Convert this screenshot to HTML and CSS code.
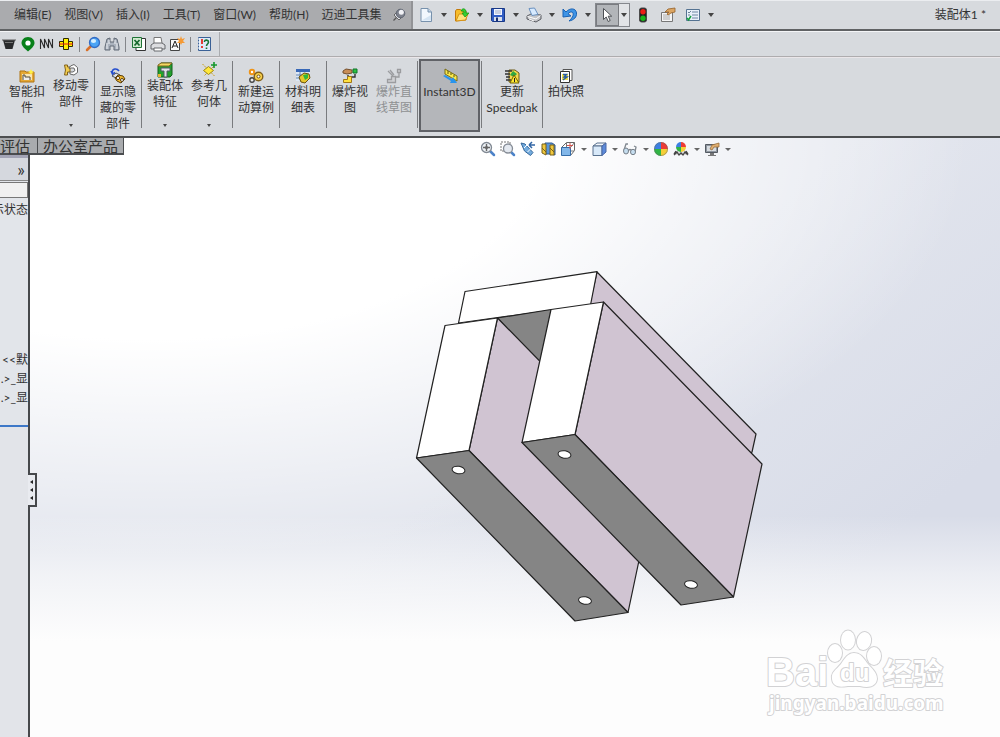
FILE: index.html
```
<!DOCTYPE html>
<html lang="zh-CN">
<head>
<meta charset="utf-8">
<title>装配体1 *</title>
<link rel="stylesheet" href="styles.css">
</head>
<body>
<header class="titlebar">
  <nav class="menubar">
    <button class="menu">编辑(E)</button>
    <button class="menu">视图(V)</button>
    <button class="menu">插入(I)</button>
    <button class="menu">工具(T)</button>
    <button class="menu">窗口(W)</button>
    <button class="menu">帮助(H)</button>
    <button class="menu">迈迪工具集</button>
    <button class="icon" aria-label="固定菜单"><svg viewBox="0 0 16 16"><path d="M6 10 2.500 13.500" stroke="#555" stroke-width="1.300"/><path d="m3 8 5 5 2-2-5-5z" fill="#e4e5ea" stroke="#666"/><circle cx="9.500" cy="6.500" r="4.300" fill="#7d818c" stroke="#5f6572"/><circle cx="10.300" cy="5.300" r="2.500" fill="#f1f2f6"/></svg></button>
  </nav>
  <div class="quick">
    <button class="icon" aria-label="新建"><svg viewBox="0 0 16 16"><path d="M3 1.500h7l3.500 3.500v9.500H3z" fill="#f1f7fd" stroke="#7791ac"/><path d="M10 1.500V5h3.500" fill="#c2d4e6" stroke="#7791ac"/><path d="M3.500 13.500H13V8z" fill="#d4e4f3"/></svg></button>
    <button class="caret" aria-label="新建选项"></button>
    <button class="icon" aria-label="打开"><svg viewBox="0 0 16 16"><path d="M1.500 14V4l1-1.500h4L8 4h4v9z" fill="#f6bd2a" stroke="#c37a0c"/><path d="M2 14 5 7h9l-2.500 6z" fill="#ffe27b" stroke="#d79316"/><path d="M7 4c1-3 4-3 5 0V6h3l-4 4-3-4h2c0-2-1-2-3-2z" fill="#36cf35" stroke="#10930f" stroke-width=".7"/></svg></button>
    <button class="caret" aria-label="打开选项"></button>
    <button class="icon" aria-label="保存"><svg viewBox="0 0 16 16"><path d="M1.500 1.500h13v13h-12l-1-1z" fill="#315dc4" stroke="#183886"/><path d="M4 2h8v6H4z" fill="#f1f5ff"/><path d="M5 4h6M5 6h6" stroke="#9faac4"/><path d="M4 10h8v4H4z" fill="#d9dfeb"/><path d="M6 10.500h2V14H6z" fill="#173074"/></svg></button>
    <button class="caret" aria-label="保存选项"></button>
    <button class="icon" aria-label="打印"><svg viewBox="0 0 16 16"><path d="m1 9 4-2 10 1v4l-5 3-9-3z" fill="#c4c5c9" stroke="#5b5d63"/><path d="M3 1.500 8.500 1l3.500 6.500-6 1z" fill="#d7eaff" stroke="#6a91c0"/><path d="m1.500 9.500 8.500 2.500 4.500-3.500M3 12l5 2" fill="none" stroke="#fff"/></svg></button>
    <button class="caret" aria-label="打印选项"></button>
    <button class="icon" aria-label="撤销"><svg viewBox="0 0 16 16"><path d="M1 2v8l8-1-3-2.300C9 3.500 12 5 11 8.500c-.5 2-2 3.500-4 5.500 5-1 8-4 7.500-8C14 1 8 .5 4 5z" fill="#3e94e6" stroke="#1961b3"/></svg></button>
    <button class="caret" aria-label="撤销选项"></button>
    <div class="split">
      <button class="pick" aria-label="选择"><svg viewBox="0 0 16 16"><path d="M4.500 1.500v11l2.700-2.500 2 4.500 2-1-2-4.300h3.500z" fill="#fff" stroke="#4d5055"/></svg></button>
      <button class="caret" aria-label="选择选项"></button>
    </div>
    <div class="quick-end">
      <button class="icon" aria-label="重建模型"><svg viewBox="0 0 16 16"><rect x="4.500" y="1" width="7" height="14" rx="2" fill="#222" stroke="#4b4b4b"/><circle cx="8" cy="4.700" r="2.700" fill="#ec1d16"/><circle cx="8" cy="11.200" r="2.700" fill="#1bb51c"/></svg></button>
      <button class="icon" aria-label="文件属性"><svg viewBox="0 0 16 16"><path d="M1.500 5.500h11v9h-11z" fill="#f4f4f5" stroke="#777"/><path d="M3 8h7M3 10h7M3 12h7" stroke="#aaa"/><path d="M5 5 8 2l7-1v4l-4 1-3 2-1-1 2-2z" fill="#dba563" stroke="#95622b" stroke-width=".8"/></svg></button>
      <button class="icon" aria-label="选项"><svg viewBox="0 0 16 16"><path d="M1.500 2.500h13v11h-13z" fill="#e9f1f9" stroke="#557392"/><path d="M7 5h6M7 8h6M7 11h6" stroke="#6c86a1"/><path d="m3 5 1 1 2-2M3 8h2" fill="none" stroke="#6b8096"/><path d="m2 11 1.500 2L6 9" fill="none" stroke="#14a03d" stroke-width="1.500"/></svg></button>
    </div>
    <button class="caret" aria-label="更多选项"></button>
  </div>
  <h1 class="doc-title">装配体1 *</h1>
</header>

<div class="tools">
  <div class="tool-band">
    <button class="icon" aria-label="滤杯"><svg viewBox="0 0 16 16"><path d="M2 4h12l-2.500 9h-7z" fill="#292a2c"/><path d="M1 4h14" stroke="#5a5a5a"/><path d="M4 6.500h8" stroke="#777"/></svg></button>
    <button class="icon" aria-label="垫圈"><svg viewBox="0 0 16 16"><path d="M8 1C4 1 1.500 4 1.500 7S5 13 8 15.500C11 13 14.500 10 14.500 7S12 1 8 1z" fill="#08801a"/><circle cx="8" cy="7" r="2.600" fill="#fff"/></svg></button>
    <button class="icon" aria-label="弹簧"><svg viewBox="0 0 16 16"><path d="M1.500 13V3l4 9V3l4 9V3l4 9V3" fill="none" stroke="#2b2b2b" stroke-width="1.100"/></svg></button>
    <button class="icon" aria-label="联轴器"><svg viewBox="0 0 16 16"><path d="M5.500 2.500h5v3h4v5h-4v3h-5v-3h-4v-5h4z" fill="#fff100" stroke="#2c2900"/><path d="M5.500 5v6M10.500 5v6" stroke="#2c2900"/><path d="M1 8h14" stroke="#e21b17"/></svg></button>
    <i class="bar"></i>
    <button class="icon" aria-label="查找"><svg viewBox="0 0 16 16"><path d="m6 10-4 4" stroke="#d9702a" stroke-width="2.500" stroke-linecap="round"/><circle cx="9.500" cy="6.500" r="5" fill="#4ba4f5" stroke="#346cc4" stroke-width="1.300"/><ellipse cx="8.500" cy="5" rx="2.600" ry="2" fill="#d6efff"/></svg></button>
    <button class="icon" aria-label="望远镜"><svg viewBox="0 0 16 16"><path d="M3 3 6 2v4h4V2l3 1 2 8v3h-5v-4H6v4H1v-3z" fill="#aab2bd" stroke="#626b77"/><path d="M3 7v6M5 4v4M11 4v4M13 7v6" stroke="#eef0f4"/></svg></button>
    <i class="bar"></i>
    <button class="icon" aria-label="导出表格"><svg viewBox="0 0 16 16"><path d="M5 2.500h9.500v12H5z" fill="#fff" stroke="#333"/><path d="M1.500 1.500h9v10h-9z" fill="#cfe9cf" stroke="#1f7336"/><path d="m3.500 4 5 5.500M8.500 4l-5 5.500" stroke="#14662c" stroke-width="1.700"/></svg></button>
    <button class="icon" aria-label="批量打印"><svg viewBox="0 0 16 16"><path d="M4 7V1.500h7L12 7" fill="#fff" stroke="#777"/><path d="m1 9 3-2h8l3 2v4H1z" fill="#dcdde0" stroke="#66686c"/><path d="M4 12h8v3H4z" fill="#fff" stroke="#66686c"/></svg></button>
    <button class="icon" aria-label="文字样式"><svg viewBox="0 0 16 16"><path d="M1.500 3.500h9v11h-9z" fill="#f9f9f9" stroke="#444"/><path d="m3 12 3-7 3 7M4 10h4" fill="none" stroke="#222"/><path d="m12 0 1 3 3-1-2 3 2 2-3 0-1 2-1-2-3 0 2-2-2-3 3 1z" fill="#f59a35"/></svg></button>
    <i class="bar"></i>
    <button class="icon" aria-label="帮助"><svg viewBox="0 0 16 16"><path d="M2.500 1.500h12v13h-12z" fill="#dce9f8" stroke="#3b6196"/><path d="M2 3h2M2 6h2M2 9h2M2 12h2" stroke="#fff"/><path d="M6 3v5M6 10v2" stroke="#e32d21" stroke-width="1.800"/><path d="M8.500 6c0-3 4-2 4 0s-2 2-2 4M10.500 11.500V13" fill="none" stroke="#147532" stroke-width="1.600"/></svg></button>
  </div>
</div>

<div class="ribbon">
  <button class="cmd"><svg viewBox="0 0 16 16"><path d="M1 3h5l1 1h8v10H1z" fill="#e6a936" stroke="#af7412"/><path d="M3 6h10v6H3z" fill="#f8e6b6"/><path d="M4 12V7h2v2h5v3" fill="#eee" stroke="#554b38"/><path d="m12 1 1 2 2 1-2 1-1 2-1-2-2-1 2-1z" fill="#fff145"/></svg><span>智能扣<br>件</span></button>
  <button class="cmd more"><svg viewBox="0 0 16 16"><path d="M1.500 3h3v2h2.500v5H4.500v3h-3l1-5z" fill="#f2cd4e" stroke="#80611c"/><path d="M6 6.500 7.500 4 11 2.500l3.500 3v5L11 13l-4-1v-2h3l2-1.500L11 6H8z" fill="#fff" stroke="#666"/></svg><span>移动零<br>部件</span><i class="drop"></i></button>
  <i class="sep"></i>
  <button class="cmd"><svg viewBox="0 0 16 16"><path d="M2 5c0-5 5-5 7-2M1 3l1.500 3L5 4.500" fill="none" stroke="#264fce" stroke-width="1.600"/><path d="m2 8 4-3 4 2-4 3z" fill="#dce1ed" stroke="#4a4f5c"/><path d="m5 10 3-3 5 1 2 3-4 4-4-2z" fill="#f0b72e" stroke="#5a3f0a"/><circle cx="8" cy="10" r="1.600" fill="#fff" stroke="#66430b"/><circle cx="12" cy="12" r="1.500" fill="#fff" stroke="#553d13"/></svg><span>显示隐<br>藏的零<br>部件</span></button>
  <i class="sep"></i>
  <button class="cmd more"><svg viewBox="0 0 16 16"><path d="m1 4 3-3h11v12l-2 2H1z" fill="#22a22c" stroke="#145c1a"/><path d="M1 3 4 1h11l-3 3H1z" fill="#f3da62" stroke="#826522"/><path d="M4 6h9v3h-3v6H7V9H4z" fill="#e1e3e8" stroke="#555b68"/><path d="M1 12h3v3H1z" fill="#e6b532"/></svg><span>装配体<br>特征</span><i class="drop"></i></button>
  <button class="cmd more"><svg viewBox="0 0 16 16"><path d="m1.500 2 12 12M14 3 3 14" stroke="#c99b12" stroke-dasharray="2 1"/><path d="m2.500 8.500 5-4 5 4-5 4z" fill="#ffe83a" stroke="#9c8512"/><path d="M13 0v6M10 3h6" stroke="#15982e" stroke-width="1.600"/></svg><span>参考几<br>何体</span><i class="drop"></i></button>
  <i class="sep"></i>
  <button class="cmd"><svg viewBox="0 0 16 16"><circle cx="4" cy="4" r="2.200" fill="#fff" stroke="#ef9417" stroke-width="2"/><circle cx="4" cy="12" r="2.200" fill="#eee" stroke="#444" stroke-width="1.400"/><circle cx="10.500" cy="8.500" r="4.300" fill="#fbd34c" stroke="#81601a" stroke-width="1.400"/><circle cx="10.500" cy="8.500" r="1.500" fill="#fff" stroke="#705117"/></svg><span>新建运<br>动算例</span></button>
  <i class="sep"></i>
  <button class="cmd"><svg viewBox="0 0 16 16"><path d="M1 2h14v11H1z" fill="#dbe7f6"/><path d="M1 1h14v3H1z" fill="#3868b7"/><path d="M1 7h7M1 10h6M5 4v8" stroke="#6484ae"/><path d="m4 9 5-4 5 1 1 4-5 5-4-1z" fill="#e7c72d" stroke="#685310"/><path d="m8 7 5-1v4l-3 2z" fill="#2fb73c"/></svg><span>材料明<br>细表</span></button>
  <i class="sep"></i>
  <button class="cmd"><svg viewBox="0 0 16 16"><path d="m1 3 3-2 6 1v3L5 6 1 5z" fill="#c98d56" stroke="#74502e"/><path d="M11 1h4v4h-4z" fill="#2bc142" stroke="#13752a"/><path d="M6 7v4M13 6v3H9v4" fill="none" stroke="#333" stroke-width="1.400"/><path d="M1.500 11.500h4v-3h4v6h-8z" fill="#ffe140" stroke="#a07817"/></svg><span>爆炸视<br>图</span></button>
  <button class="cmd" disabled><svg viewBox="0 0 16 16"><path d="m2 3 5 5M4 2l4 5" stroke="#9b9c9f" stroke-width="1.300"/><path d="M11.500 1.500h3v3h-3zM13 5v4H9M1.500 11.500h4v-3h4v6h-8z" fill="#cfd0d3" stroke="#9b9c9f" stroke-width="1.300"/></svg><span>爆炸直<br>线草图</span></button>
  <i class="sep"></i>
  <button class="cmd pressed" aria-pressed="true"><svg viewBox="0 0 16 16"><path d="m3 1 12 7v5L3 6z" fill="#f8e84b" stroke="#796d17"/><path d="M6 3v3M9 5v2M12 7v2" stroke="#5d5412"/><path d="m1 8 2-1 7 4 1-2 4 6h-7l1-2z" fill="#2894ed"/></svg><span>Instant3D</span></button>
  <i class="sep"></i>
  <button class="cmd wide"><svg viewBox="0 0 16 16"><path d="M5 2h6l4 3v9H5z" fill="#f5d84d" stroke="#6b5a18"/><path d="M1 3h7M1 6h5M2 9h4M2 12h5" stroke="#333" stroke-width="1.300"/><path d="m6 7 3-4 4 3-3 3z" fill="#30a741"/><path d="m10 7 5 8H6z" fill="#ffe934" stroke="#706000"/><path d="M10.500 10v4" stroke="#222"/></svg><span>更新<br>Speedpak</span></button>
  <i class="sep"></i>
  <button class="cmd"><svg viewBox="0 0 16 16"><path d="M5 1.500h9v11H5z" fill="#fff" stroke="#555"/><path d="M2.500 3.500h9v11h-9z" fill="#fff" stroke="#333"/><path d="M4 6h6v6H4z" fill="#f2dd45"/><path d="M5 6.500h3.500L6 9h3l-4 3" fill="none" stroke="#265ba6" stroke-width="1.400"/></svg><span>拍快照</span></button>
</div>

<main class="workspace">
  <svg class="model" viewBox="0 138 1000 599" role="img" aria-label="U 形支架装配体">
    <g stroke="#222" stroke-width="1.200" stroke-linejoin="round">
      <path d="M597 272 756 434 752 452 735 470 590 303z" fill="#d0c4d2"/>
      <path d="M465 291.500 597 271.700 590.500 305 458.500 323z" fill="#fff"/>
      <path d="M497.500 318 551 309.500 545 370z" fill="#858585"/>
      <path d="M497.500 318 656 480 628 612.500 469 450.500z" fill="#d0c4d2"/>
      <path d="M445 325.500 497.500 318 469 450.500 416.500 458z" fill="#fff"/>
      <path d="M416.500 458 469 450.500 628 612.500 575 621z" fill="#858585"/>
      <path d="M603.500 302 762 464 733.500 597 575 434.500z" fill="#d0c4d2"/>
      <path d="M551 309.500 603.500 302 575 434.500 522 442.500z" fill="#fff"/>
      <path d="M522 442.500 575 434.500 733.500 597 681 605z" fill="#858585"/>
    </g>
    <g fill="#fff" stroke="#222">
      <ellipse cx="458.500" cy="470" rx="6.500" ry="3.700" transform="rotate(10 458.500 470)"/>
      <ellipse cx="564.500" cy="454.500" rx="6.500" ry="3.700" transform="rotate(10 564.500 454.500)"/>
      <ellipse cx="585" cy="600.500" rx="6.500" ry="3.700" transform="rotate(10 585 600.500)"/>
      <ellipse cx="691" cy="584.500" rx="6.500" ry="3.700" transform="rotate(10 691 584.500)"/>
    </g>
  </svg>

  <div class="tabs">
    <button class="tab">评估</button>
    <button class="tab">办公室产品</button>
  </div>

  <aside class="panel">
    <div class="panel-head"><button class="expand" aria-label="展开">»</button></div>
    <input class="filter" aria-label="过滤">
    <p class="row state">示状态</p>
    <ul class="tree">
      <li class="row">&lt;&lt;默</li>
      <li class="row">.&gt;_显</li>
      <li class="row">.&gt;_显</li>
    </ul>
    <div class="panel-foot"></div>
    <button class="grip" aria-label="折叠面板"><svg viewBox="0 0 5 22"><path d="M4 1v4L1 3zM4 9v4L1 11zM4 17v4L1 19z" fill="#222"/></svg></button>
  </aside>

  <div class="heads-up">
    <button class="icon" aria-label="整屏显示全图"><svg viewBox="0 0 16 16"><path d="m10 10 4 4" stroke="#4c83c9" stroke-width="2.500" stroke-linecap="round"/><circle cx="6.500" cy="6.500" r="5" fill="#edf1f5" stroke="#808892" stroke-width="1.300"/><path d="M6.500 3v7M3 6.500h7" stroke="#666" stroke-width="1.400"/><circle cx="6.500" cy="6.500" r="1.600" fill="#666"/></svg></button>
    <button class="icon" aria-label="局部放大"><svg viewBox="0 0 16 16"><path d="M1 1h9v9H1z" fill="none" stroke="#777" stroke-dasharray="2 1"/><path d="m11 11 3 3" stroke="#4c83c9" stroke-width="2.500" stroke-linecap="round"/><circle cx="8" cy="7.500" r="4.500" fill="#e4e9f0" stroke="#858c96" stroke-width="1.300"/></svg></button>
    <button class="icon" aria-label="上一视图"><svg viewBox="0 0 16 16"><path d="m1 2 4 1 8 8.500-2.500 3-6-4.500z" fill="#74acde" stroke="#38699b"/><path d="m4 7 3-3M7.500 11l3-3" stroke="#fff"/><path d="M15 4H9m0 0 3-3M9 4l3 3" fill="none" stroke="#3266a5" stroke-width="1.500"/></svg></button>
    <button class="icon" aria-label="剖面视图"><svg viewBox="0 0 16 16"><path d="M5 2h7l3 2v10l-4-1H6z" fill="#5895db" stroke="#315d98"/><path d="M2 3h4v11l-4-2zM10 4h4v10h-4z" fill="#f0c83c" stroke="#77611b"/><path d="m2 7 4 4M10 7l4 4" stroke="#77611b"/></svg></button>
    <button class="icon" aria-label="视图定向"><svg viewBox="0 0 16 16"><path d="m1.500 6.500 5-5h8v8l-4 5" fill="#fff" stroke="#666"/><path d="M1.500 6.500h9v8h-9z" fill="#82b7e9" stroke="#356da9"/><path d="m10.500 6.500 4-5M6.500 2v4M11 10h3" stroke="#777"/><path d="M10 2v6M7 4.500h6" stroke="#d25650"/></svg></button>
    <button class="caret" aria-label="视图定向选项"></button>
    <button class="icon" aria-label="显示样式"><svg viewBox="0 0 16 16"><path d="m2 5 4-3h9l-4 3z" fill="#f3f7fc" stroke="#58718e"/><path d="M2 5h9v9.500H2z" fill="#d8e9f9" stroke="#58718e"/><path d="m11 5 4-3v9l-4 3.500z" fill="#5c8ada" stroke="#4a68a5"/></svg></button>
    <button class="caret" aria-label="显示样式选项"></button>
    <button class="icon" aria-label="隐藏/显示项目"><svg viewBox="0 0 16 16"><path d="M2 9 4 3l2 0M13 11l1-5-2-1M6 10c1-2 3-2 4 0" fill="none" stroke="#818890" stroke-width="1.300"/><ellipse cx="4" cy="10" rx="2.500" ry="3" fill="#c5ddef" stroke="#777f88"/><ellipse cx="11" cy="11" rx="2.500" ry="2.700" fill="#c5ddef" stroke="#777f88"/></svg></button>
    <button class="caret" aria-label="隐藏/显示选项"></button>
    <button class="icon" aria-label="编辑外观"><svg viewBox="0 0 16 16"><path d="M8 8V1a7 7 0 0 0-7 7z" fill="#3c80e2"/><path d="M8 8h7a7 7 0 0 0-7-7z" fill="#ed3b35"/><path d="M8 8H1a7 7 0 0 0 7 7z" fill="#30b545"/><path d="M8 8v7a7 7 0 0 0 7-7z" fill="#f5cf37"/><circle cx="8" cy="8" r="6.500" fill="none" stroke="#666" stroke-opacity=".5"/></svg></button>
    <button class="icon" aria-label="应用布景"><svg viewBox="0 0 16 16"><path d="M1 14 4 9h8l3 5z" fill="#ddd"/><path d="M8 6V1a5 5 0 0 0-5 5z" fill="#3c80e2"/><path d="M8 6h5a5 5 0 0 0-5-5z" fill="#ed3b35"/><path d="M8 6H3a5 5 0 0 0 5 5z" fill="#30b545"/><path d="M8 6v5a5 5 0 0 0 5-5z" fill="#f5cf37"/><path d="m1 14 3-3 2 3 2-2 2 2 2-3 3 3M3 10 1 13M13 10l2 3" fill="none" stroke="#444" stroke-width="1.300"/></svg></button>
    <button class="caret" aria-label="布景选项"></button>
    <button class="icon" aria-label="视图设定"><svg viewBox="0 0 16 16"><path d="M1.500 3.500h12v8h-12z" fill="#8f969f" stroke="#555b63"/><path d="M3 5h9v5H3z" fill="#d7dce1"/><path d="M6 12h4v2h2v1H4v-1h2z" fill="#777"/><path d="m6 8 2-4 7-2v4l-5 0-2 3z" fill="#dfae70" stroke="#976c3b" stroke-width=".8"/></svg></button>
    <button class="caret" aria-label="视图设定选项"></button>
  </div>

  <svg class="watermark" viewBox="0 0 190 92" role="img" aria-label="Baidu 经验 jingyan.baidu.com">
    <g fill="#fff" stroke="#d2d2d4" stroke-width="2" stroke-linejoin="round" paint-order="stroke">
      <text class="mark-bai" x="2" y="58">Bai</text>
      <ellipse cx="71" cy="25" rx="7" ry="9"/>
      <ellipse cx="84" cy="12" rx="7" ry="9.500"/>
      <ellipse cx="100" cy="13" rx="7" ry="9" transform="rotate(12 100 13)"/>
      <ellipse cx="110" cy="28" rx="7" ry="9"/>
      <path d="M90 25c-6 0-9 5-13 11-5 6-10 8-9 15 1 9 9 8 16 7h12c8 2 16 1 17-7 0-7-5-10-10-16-4-6-7-10-13-10z"/>
      <text class="mark-du" x="76" y="53">du</text>
      <text class="mark-cn" x="119" y="56">经验</text>
      <text class="mark-url" x="5" y="82">jingyan.baidu.com</text>
    </g>
  </svg>
</main>
</body>
</html>
```
FILE: styles.css
```
* { box-sizing: border-box; }

body {
  margin: 0;
  height: 100vh;
  display: flex;
  flex-direction: column;
  overflow: hidden;
  background: #d7dade;
  color: #333;
  font: 12px/16px Lato, "Noto Sans CJK SC", sans-serif;
}

button {
  margin: 0;
  padding: 0;
  border: 0;
  background: none;
  color: inherit;
  font: inherit;
  flex: none;
}

svg { display: block; }

.icon, .icon svg, .pick svg, .cmd svg { width: 16px; height: 16px; }

.caret {
  width: 10px;
  height: 16px;
  display: flex;
  align-items: center;
  justify-content: center;
}

.caret::before, .drop {
  content: "";
  border: 3px solid transparent;
  border-top: 4px solid #444;
  border-bottom: 0;
}

/* title bar */
.titlebar {
  flex: none;
  height: 31px;
  display: flex;
  border-top: 1px solid #ebedf0;
  border-bottom: 2px solid #606264;
}

.menubar {
  display: flex;
  align-items: center;
  gap: 13px;
  padding: 0 4px 0 14px;
  background: #aaabae;
  border-right: 2px solid #929396;
}

.menubar .icon { margin-left: -4px; }

.quick {
  display: flex;
  align-items: center;
  gap: 5px;
  padding-left: 5px;
}

.split {
  display: flex;
  align-items: stretch;
  height: 24px;
  margin-left: -3px;
  border: 1px solid #85888d;
}

.pick {
  width: 23px;
  display: flex;
  align-items: center;
  justify-content: center;
  background: #b2b5b9;
  border: 1px solid #797b80;
}

.split .caret { height: auto; background: #e2e4e7; }

.quick-end { display: flex; gap: 9px; }

.doc-title {
  margin: 0 14px 0 auto;
  align-self: center;
  font-size: 12px;
  font-weight: 400;
}

/* add-in toolbar */
.tools {
  flex: none;
  height: 26px;
  display: flex;
  border-top: 1px solid #f4f5f7;
  border-bottom: 1px solid #aeacae;
}

.tool-band {
  display: flex;
  align-items: center;
  gap: 3px;
  padding: 0 7px 0 1px;
  border-right: 1px solid #aaacb0;
}

.bar { width: 1px; height: 15px; margin: 0 2px; background: #84868a; }

/* ribbon */
.ribbon {
  flex: none;
  height: 81px;
  display: flex;
  padding: 1px 0 4px 5px;
  border-top: 1px solid #eae6e9;
  border-bottom: 2px solid #4c4e50;
}

.cmd {
  width: 44px;
  display: flex;
  flex-direction: column;
  align-items: center;
  padding-top: 9px;
  text-align: center;
  white-space: nowrap;
}

.cmd.more { padding-top: 3px; }
.cmd.wide { width: 58px; }
.cmd:disabled { color: #8e9092; }
.drop { margin-top: 14px; border-width: 3px 2px 0; }

.cmd.pressed {
  width: 61px;
  padding-top: 7px;
  background: #b4b6ba;
  border: 2px solid #606267;
}

.sep { width: 1px; margin: 2px 1px 4px; background: #797b7e; }

/* graphics area */
.workspace {
  position: relative;
  flex: 1;
  min-height: 0;
  display: flex;
  flex-direction: column;
  align-items: flex-start;
  background:
    linear-gradient(to bottom, rgba(253, 253, 253, 0) 63%, rgba(253, 253, 253, .55) 73%, #fdfdfd 84%),
    radial-gradient(ellipse 82% 70% at 15% 0, #fff 48%, rgba(255, 255, 255, .5) 74%, rgba(255, 255, 255, 0) 100%),
    linear-gradient(140deg, #e3e6ee 50%, #d8dce8 80%);
}

.model {
  position: absolute;
  inset: 0;
  width: 100%;
  height: 100%;
}

.tabs {
  position: relative;
  display: flex;
  height: 17px;
  background: #a9abae;
  border-bottom: 2px solid #4b4d50;
}

.tab {
  padding: 0 5px;
  font-size: 15px;
  line-height: 14px;
  border-right: 1px solid #4b4d50;
}

.tab:first-child { padding: 0 7px 0 0; }

.panel {
  position: relative;
  flex: 1;
  width: 30px;
  display: flex;
  flex-direction: column;
  background: #e2e5ea;
  border-right: 2px solid #46484b;
}

.panel-head {
  height: 26px;
  display: flex;
  align-items: center;
  justify-content: flex-end;
  padding-right: 3px;
  background: #d5d8de;
  border-top: 3px solid #a3a4b5;
  border-bottom: 1px solid #888;
}

.expand { font-size: 18px; }

.filter {
  width: 100%;
  height: 16px;
  margin-top: 1px;
  padding: 0;
  background: #f0f0f0;
  border: 1px solid #777;
  border-left: 0;
}

.row {
  display: flex;
  justify-content: flex-end;
  overflow: hidden;
  white-space: nowrap;
  line-height: 19px;
}

.state { margin: 2px 0 0; }

.tree {
  margin: 131px 0 0;
  padding: 0 0 18px;
  list-style: none;
  border-bottom: 2px solid #3d78c8;
}

.panel-foot { flex: 1; background: #e2e4e9; }

.grip {
  position: absolute;
  left: 28px;
  top: 318px;
  width: 9px;
  height: 34px;
  display: flex;
  align-items: center;
  justify-content: center;
  background: #e9ebf0;
  border: 2px solid #46484b;
  border-left: 0;
}

.grip svg { width: 5px; height: 22px; }

.heads-up {
  position: absolute;
  top: 3px;
  left: 48%;
  display: flex;
  align-items: center;
  gap: 4px;
}

.heads-up .caret { width: 7px; }
.heads-up .caret::before { border-top: 3px solid #666; }

.watermark {
  position: absolute;
  right: 46px;
  bottom: 17px;
  width: 190px;
  height: 92px;
}

.mark-bai { font: bold 40px "Liberation Sans", sans-serif; }
.mark-du { font: bold 24px "Liberation Sans", sans-serif; }
.mark-cn { font: bold 30px "Noto Sans CJK SC", sans-serif; }
.mark-url { font: bold 19px "Noto Sans", sans-serif; }
```
